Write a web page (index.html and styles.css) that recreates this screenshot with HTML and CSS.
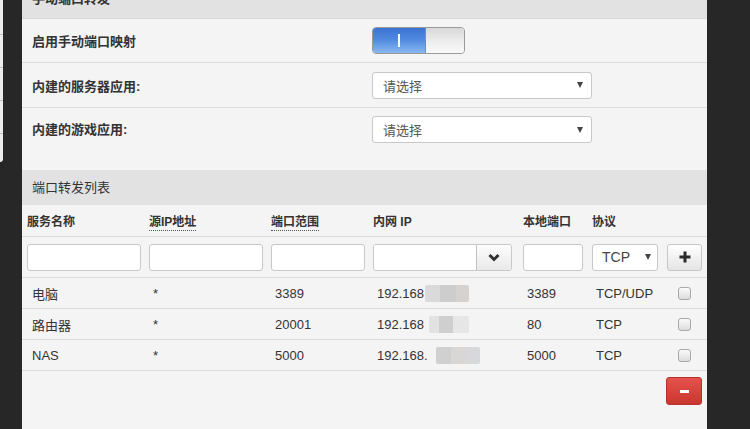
FILE: index.html
```html
<!DOCTYPE html>
<html lang="zh-CN">
<head>
<meta charset="utf-8">
<title>手动端口转发</title>
<link rel="stylesheet" href="styles.css">
</head>
<body>
<div class="page">
  <div class="sliver">
    <div class="sliver-line"></div>
    <div class="sliver-line"></div>
    <div class="sliver-line"></div>
    <div class="sliver-line"></div>
  </div>
  <main class="panel">
    <div class="section-head top-head">手动端口转发</div>
    <div class="form-row r1">
      <div class="label">启用手动端口映射</div>
      <div class="ctrl">
        <div class="toggle">
          <span class="toggle-on"><span class="bar"></span></span>
          <span class="toggle-off"></span>
        </div>
      </div>
    </div>
    <div class="form-row r2">
      <div class="label">内建的服务器应用:</div>
      <div class="ctrl">
        <div class="select wide"><span>请选择</span><i class="tri"></i></div>
      </div>
    </div>
    <div class="form-row r3">
      <div class="label">内建的游戏应用:</div>
      <div class="ctrl">
        <div class="select wide"><span>请选择</span><i class="tri"></i></div>
      </div>
    </div>
    <div class="section-head">端口转发列表</div>

    <div class="grid head-row">
      <div class="hc">服务名称</div>
      <div class="hc"><span class="abbr">源IP地址</span></div>
      <div class="hc"><span class="abbr">端口范围</span></div>
      <div class="hc">内网 IP</div>
      <div class="hc">本地端口</div>
      <div class="hc">协议</div>
      <div class="hc"></div>
    </div>

    <div class="grid input-row">
      <div class="ic"><div class="input w114"></div></div>
      <div class="ic"><div class="input w114"></div></div>
      <div class="ic"><div class="input w94"></div></div>
      <div class="ic">
        <div class="combo">
          <div class="combo-field"></div>
          <div class="combo-btn">
            <svg width="12" height="9" viewBox="0 0 12 9"><path d="M1.5 2 L6 6.5 L10.5 2" fill="none" stroke="#333" stroke-width="3"/></svg>
          </div>
        </div>
      </div>
      <div class="ic"><div class="input w60"></div></div>
      <div class="ic"><div class="select proto"><span>TCP</span><i class="tri"></i></div></div>
      <div class="ic">
        <div class="btn plus">
          <svg width="12" height="12" viewBox="0 0 12 12"><path d="M6 0.5 V11.5 M0.5 6 H11.5" stroke="#2b2b2b" stroke-width="3"/></svg>
        </div>
      </div>
    </div>

    <div class="grid data-row">
      <div class="dc">电脑</div>
      <div class="dc">*</div>
      <div class="dc">3389</div>
      <div class="dc">192.168<span class="blur b1"></span></div>
      <div class="dc">3389</div>
      <div class="dc">TCP/UDP</div>
      <div class="dc chk"><span class="checkbox"></span></div>
    </div>
    <div class="grid data-row">
      <div class="dc">路由器</div>
      <div class="dc">*</div>
      <div class="dc">20001</div>
      <div class="dc">192.168<span class="blur b2"></span></div>
      <div class="dc">80</div>
      <div class="dc">TCP</div>
      <div class="dc chk"><span class="checkbox"></span></div>
    </div>
    <div class="grid data-row">
      <div class="dc">NAS</div>
      <div class="dc">*</div>
      <div class="dc">5000</div>
      <div class="dc">192.168.<span class="blur b3"></span></div>
      <div class="dc">5000</div>
      <div class="dc">TCP</div>
      <div class="dc chk"><span class="checkbox"></span></div>
    </div>

    <div class="foot">
      <div class="btn minus"><span class="minus-bar"></span></div>
    </div>
  </main>
</div>
</body>
</html>
```

FILE: styles.css
```css
* { box-sizing: border-box; }

html, body {
  margin: 0;
  padding: 0;
  background: #272727;
  height: 429px;
  overflow: hidden;
}

body {
  font-family: "Liberation Sans", "Noto Sans CJK SC", sans-serif;
  font-size: 13px;
  color: #333;
}

.page {
  display: flex;
  align-items: flex-start;
  height: 429px;
}

.sliver {
  width: 3px;
  height: 162px;
  margin-right: 19px;
  background: #ececec;
  border-bottom-right-radius: 3px;
  padding-top: 34px;
  display: flex;
  flex-direction: column;
  gap: 32px;
}
.sliver-line {
  height: 1px;
  background: #bdbdbd;
}

.panel {
  width: 685px;
  margin-top: -18px;
  height: 447px;
  background: #f4f4f4;
}

.section-head {
  height: 35px;
  background: #e2e2e2;
  padding-left: 10px;
  line-height: 35px;
  font-size: 13px;
  color: #333;
}
.top-head {
  height: 37px;
  line-height: 34px;
  border-bottom: 1px solid #d9d9d9;
  font-weight: bold;
}

.form-row {
  display: grid;
  grid-template-columns: 350px 1fr;
  align-items: center;
  border-bottom: 1px solid #dcdcdc;
}
.form-row.r1 { height: 44px; }
.form-row.r2 { height: 45px; }
.form-row.r3 { height: 62px; border-bottom: none; align-items: start; padding-top: 8px; }
.form-row.r3 .label { line-height: 27px; }

.label {
  padding-left: 10px;
  font-weight: bold;
  font-size: 13px;
  color: #333;
}

.toggle {
  width: 93px;
  height: 27px;
  border: 1px solid #9a9a9a;
  border-radius: 4px;
  overflow: hidden;
  display: flex;
}
.toggle-on {
  width: 53px;
  background: linear-gradient(#3a73d2, #4f89df 45%, #8ab7ef);
  border-right: 1px solid #6f8fbf;
  display: flex;
  align-items: center;
  justify-content: center;
}
.toggle-on .bar {
  width: 2px;
  height: 13px;
  background: #fff;
}
.toggle-off {
  flex: 1;
  background: linear-gradient(#d8d8d8, #eeeeee 55%, #f9f9f9);
}

.select {
  height: 27px;
  background: #fff;
  border: 1px solid #c8c8c8;
  border-radius: 3px;
  display: flex;
  align-items: center;
  justify-content: space-between;
  padding: 0 8px 0 10px;
  font-size: 13px;
  color: #555;
}
.select.wide { width: 220px; }
.select.proto {
  width: 66px;
  padding: 0 6px 0 9px;
  font-size: 14px;
  color: #444;
}
.tri {
  width: 0;
  height: 0;
  border-left: 3.5px solid transparent;
  border-right: 3.5px solid transparent;
  border-top: 6px solid #444;
}

.grid {
  display: grid;
  grid-template-columns: 122px 122px 102px 150px 69px 75px 45px;
  align-items: center;
  border-bottom: 1px solid #dadada;
}

.head-row { height: 32px; }
.hc {
  padding-left: 5px;
  font-weight: bold;
  font-size: 12px;
  color: #333;
}
.abbr {
  border-bottom: 1px dotted #555;
  padding-bottom: 1px;
}

.input-row { height: 41px; }
.ic { padding-left: 5px; display: flex; }
.input {
  height: 27px;
  background: #fff;
  border: 1px solid #c8c8c8;
  border-radius: 3px;
}
.w114 { width: 114px; }
.w94 { width: 94px; }
.w60 { width: 60px; }

.combo {
  width: 139px;
  height: 27px;
  display: flex;
  border: 1px solid #c8c8c8;
  border-radius: 3px;
  overflow: hidden;
}
.combo-field { flex: 1; background: #fff; }
.combo-btn {
  width: 35px;
  border-left: 1px solid #c2c2c2;
  background: linear-gradient(#fdfdfd, #e9e9e9);
  display: flex;
  align-items: center;
  justify-content: center;
}

.btn {
  width: 35px;
  height: 27px;
  border-radius: 3px;
  display: flex;
  align-items: center;
  justify-content: center;
}
.btn.plus {
  border: 1px solid #c6c6c6;
  background: linear-gradient(#ffffff, #e4e4e4);
}

.data-row { height: 31px; }
.dc {
  padding-left: 9px;
  font-size: 13px;
  color: #333;
  display: flex;
  align-items: center;
  white-space: nowrap;
}
.dc:first-child { padding-left: 10px; }
.chk { padding-left: 16px; }
.checkbox {
  width: 13px;
  height: 13px;
  border: 1px solid #a9a9a9;
  border-radius: 3px;
  background: linear-gradient(#fafafa, #dcdcdc);
}

.blur {
  display: inline-block;
  height: 17px;
  border-radius: 2px;
  filter: blur(0.6px);
}
.b1 { width: 44px; margin-left: 1px; background: linear-gradient(90deg, #dadada 0 35%, #cdcdcd 35% 70%, #d6d2cf 70%); }
.b2 { width: 40px; margin-left: 5px; background: linear-gradient(90deg, #e2e2e2 0 25%, #cfcfcf 25% 60%, #e6e6e6 60%); }
.b3 { width: 44px; margin-left: 8px; background: linear-gradient(90deg, #d0d0d0 0 35%, #d9d7d5 35% 70%, #d6d8dc 70%); }

.foot {
  display: flex;
  justify-content: flex-end;
  padding: 6px 5px 0 0;
}
.btn.minus {
  width: 36px;
  height: 28px;
  border: 1px solid #b3322c;
  background: linear-gradient(#e5534c, #c9362f);
}
.minus-bar {
  width: 9px;
  height: 3px;
  background: #fff;
}
```
